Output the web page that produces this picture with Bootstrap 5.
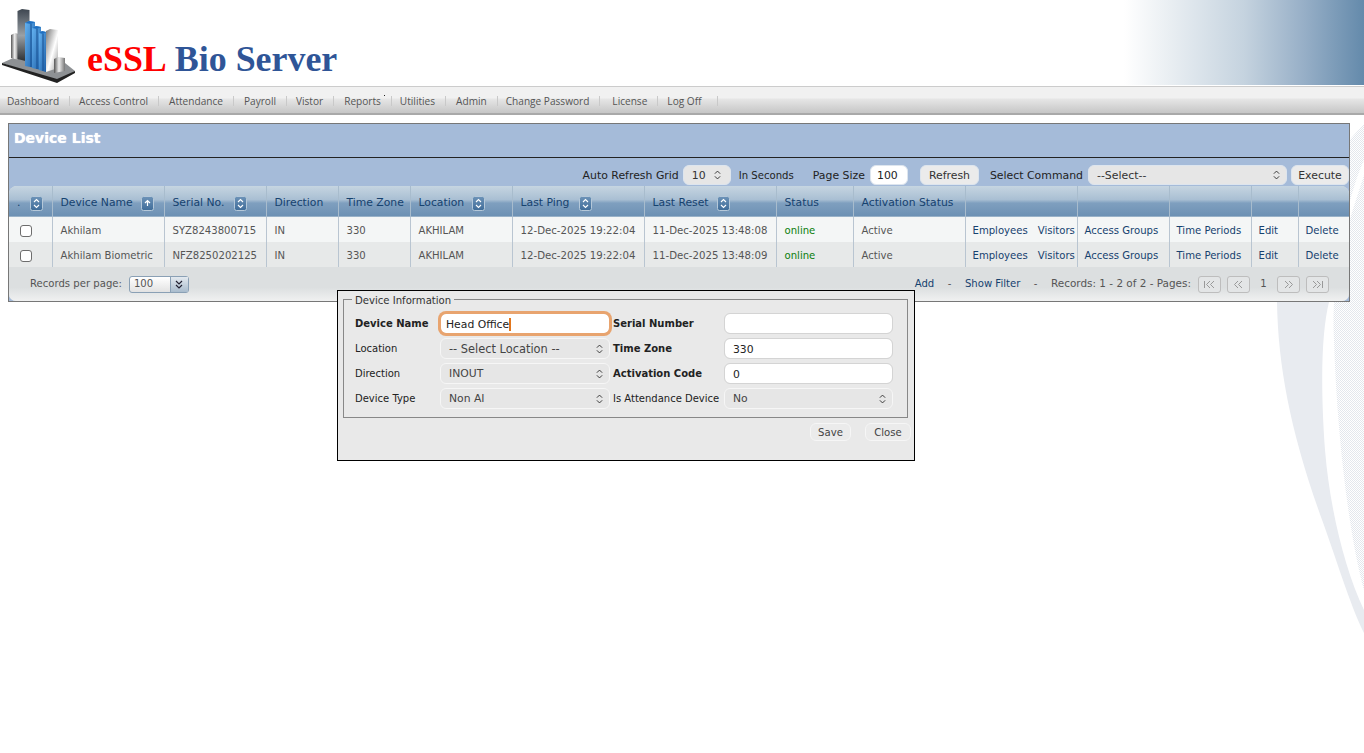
<!DOCTYPE html>
<html lang="en">
<head>
<meta charset="UTF-8">
<title>eSSL Bio Server</title>
<link href="https://cdn.jsdelivr.net/npm/bootstrap@5.3.0/dist/css/bootstrap.min.css" rel="stylesheet">
<style>
html, body { height: 100%; overflow: hidden; }
body { background: #fff; font-family: "DejaVu Sans", Verdana, sans-serif; font-size: 10px; color: #444; position: relative; }
.swoosh { position: absolute; right: 0; top: 0; z-index: -1; }

.top-head { height: 85px; }
.logo-box { width: 87px; height: 85px; }
.brand-name { font-family: "Liberation Serif", serif; font-weight: 700; font-size: 35.9px; color: #2f5597; line-height: 1; margin-top: 42px; white-space: nowrap; }
.brand-name b { color: #f00; margin-right: 8px; }
.head-fade { width: 240px; height: 85px; background: linear-gradient(90deg, #fff 0%, #eef2f5 15%, #c5d3df 50%, #97afc7 75%, #648aab 100%); }

.main-menu { height: 29px; margin-top: 1px; border-top: 1px solid #ccc; border-bottom: 2px solid #a9a9a9; background: linear-gradient(180deg, #f1f1f1 0, #f1f1f1 11px, #e6e6e6 12px, #c6c6c6 100%); font-family: "Open Sans", sans-serif; font-size: 10.1px; color: #555; padding: 2px 0 0 7px; }
.main-menu span { padding-right: 10px; margin-right: 10px; border-right: 1px solid #c9c9c9; line-height: 10px; white-space: nowrap; }
.main-menu .menu-tight { margin-right: 9px; }
.main-menu .menu-tighter { margin-right: 8px; }
.main-menu .menu-loose { margin-right: 12px; }
.main-menu .menu-last { padding-right: 16px; }
.menu-dot { position: relative; }
.menu-dot::after { content: ""; position: absolute; right: 6px; top: -1px; width: 1px; height: 1px; background: #222; }

.grid-panel { margin: 8px 14px 0 8px; border: 1px solid #777; background: #a5bbd9; }
.panel-title { height: 34px; padding: 0 0 5px 5px; border-bottom: 1px solid #222; color: #fff; font-weight: 700; font-size: 14px; text-shadow: 0 0 1px #fff; }
.tool-strip { height: 28px; font-size: 10.9px; color: #222; padding-top: 6px; white-space: nowrap; }
.tool-strip > span { padding-top: 2px; }
.strip-select, .strip-input, .strip-btn { height: 20px; border: 1px solid #dde5ee; border-radius: 6px; font-size: 10.9px; color: #333; padding: 1px 8px 0; line-height: 18px; flex: none; }
.strip-select { background-color: #e6e6e6; }
.strip-input { background: #fff; color: #222; width: 38px; padding: 1px 6px 0; margin-left: 5px; }
.strip-btn { background: #ebebeb; }
.form-select.refresh-pick { width: 48px; margin-left: 4px; padding: 1px 0 0 8px; }
.form-select.cmd-pick { width: 199px; margin-left: 5px; }
.strip-gap-s { margin-left: 8px; font-size: 10.1px; }
.strip-gap-m { margin-left: 19px; }
.strip-gap-l { margin-left: 12px; }
.strip-gap-x { margin-left: 11px; }
.strip-gap-t { margin-left: 4px; width: 58px; padding: 1px 0 0; }
.refresh-btn { width: 59px; padding: 1px 0 0; }

.form-select.strip-select, .form-select.info-select {
  background-image: url("data:image/svg+xml,%3Csvg xmlns='http://www.w3.org/2000/svg' viewBox='0 0 8 11'%3E%3Cpath d='M1 4l3-3 3 3M1 7l3 3 3-3' fill='none' stroke='%23333' stroke-width='1.1'/%3E%3C/svg%3E");
  background-position: right 6px center; background-size: 7px 10px; box-shadow: none;
}
.form-select.strip-select.refresh-pick { background-position: right 9px center; }

.grid-shell { border-radius: 8px 8px 7px 7px; overflow: hidden; background: #dcdfe0; }
.devgrid { table-layout: fixed; width: 1340px; margin: 0; --bs-table-bg: transparent; --bs-table-border-color: #b9c5d1; }
.devgrid.table > :not(caption) > * > * { padding: 3px 8px 0; border-bottom: 0; border-right: 1px solid #b9c5d1; vertical-align: middle; white-space: nowrap; color: #555; box-shadow: none; }
.devgrid.table > :not(caption) > * > *:last-child { border-right: 0; }
.devgrid thead tr { height: 31px; background: linear-gradient(180deg, #c6d5e1 0, #a9bfd3 44%, #7f9fbf 55%, #6d91b4 96%, #b6c8d6 100%); }
.devgrid.table > thead > tr > th { padding-top: 4px; font-weight: 400; font-size: 10.8px; color: #16426f; border-right-color: #a8bccd; }
.devgrid tbody tr { height: 25px; background: #f4f6f6; }
.devgrid tbody tr:nth-child(2) { background: #e7e9e9; }
.devgrid.table > tbody > tr > td { font-size: 10.1px; }
.devgrid.table > tbody > tr > td.date-cell { font-size: 10.2px; }
.devgrid.table > tbody > tr > td.link-cell { padding-left: 7px; }
.devgrid.table > tbody > tr > td a { color: #16426f; text-decoration: none; }
.devgrid.table > tbody > tr > td.is-online { color: #0b800b; }
.links-gap { margin-left: 10px; }
.head-cell { overflow: hidden; }
.head-wide { gap: 10px; }
.sort-ico { width: 13px; height: 15px; flex: none; display: block; }
.row-check { width: 12px; height: 12px; border: 1px solid #6d6d6d; border-radius: 3px; background: #fff; display: block; margin-left: 3px; }

.grid-foot { height: 34px; padding: 0 20px 0 21px; font-size: 10.1px; color: #555; background: linear-gradient(180deg, #dcdfe0 0, #dcdfe0 60%, #f0f1f1 100%); }
.grid-foot a { color: #16426f; text-decoration: none; }
.page-size { width: 60px; height: 17px; margin-left: 7px; border: 1px solid #8aa0b5; border-radius: 3px; background: linear-gradient(180deg, #fff, #e2e2e2); }
.page-size i { font-style: normal; padding-left: 4px; flex: 1; }
.page-size u { width: 18px; height: 100%; text-decoration: none; border-left: 1px solid #8aa0b5; background: linear-gradient(180deg, #e3e9ef, #a9bccd); }
.foot-dash { margin: 0 13.5px; }
.foot-count { font-size: 10.45px; }
.pager-btn { width: 23px; height: 17px; border: 1px solid #bdbdbd; border-radius: 3px; background: #e3e5e6; flex: none; }
.pager-first { margin-left: 7px; }
.pager-next { margin-left: 6px; }
.pager-num { width: 27px; text-align: center; }

.info-dialog { position: absolute; left: 337px; top: 290px; width: 578px; height: 171px; border: 1px solid #000; background: #e9e9e9; padding: 3px 5px; color: #222; font-size: 10px; }
.info-set { border: 1px solid #888; height: 119px; padding: 11px 0 0 11px; margin: 5px 1px 0 0; position: relative; }
.info-legend { position: absolute; left: 8px; top: -6px; background: #e9e9e9; padding: 0 3px; font-size: 10.1px; line-height: 13px; width: auto; float: none; margin: 0; color: #333; }
.info-row { height: 25px; }
.info-label { width: 85px; flex: none; white-space: nowrap; }
.info-label2 { width: 111px; flex: none; white-space: nowrap; }
.info-ctl { position: relative; flex: none; width: 170px; margin-right: 3px; }
.info-ctl2 { flex: none; width: 169px; }
.info-input, .info-select { height: 21px; min-height: 0; border: 1px solid #d4d4d4; border-radius: 6px; padding: 0 8px; font-size: 10.8px; line-height: 19px; color: #222; box-shadow: none; }
.form-control.info-input { padding-top: 1px; }
.info-select { border-color: #f6f6f6; background-color: #e6e6e6; color: #444; }
.form-select.loc-pick { font-size: 11.4px; padding-top: 1px; }
.form-control.info-focus { border: 1px solid #e8a46f; box-shadow: 0 0 0 2px #e8a46f; border-radius: 6px; padding-left: 5px; }
.fake-caret { position: absolute; left: 69px; top: 5px; width: 2px; height: 13px; background: #e2761d; }
.dlg-btn { height: 18px; border: 1px solid #f6f6f6; border-radius: 6px; background: #ebebeb; font-size: 10.1px; color: #444; padding: 0; line-height: 15px; }
.btn-save { width: 41px; }
.btn-close-dlg { width: 46px; }
.dlg-actions { margin-top: 5px; margin-right: -2px; gap: 14px; }
</style>
</head>
<body>
<svg class="swoosh" width="120" height="753" viewBox="1244 0 120 753">
  <defs>
    <pattern id="stipple" width="2" height="2" patternUnits="userSpaceOnUse"><rect width="1" height="1" fill="#e3e7ed"/><rect x="1" y="1" width="1" height="1" fill="#e3e7ed"/></pattern>
  </defs>
  <path d="M1277 302C1278 367 1291 433 1321 517C1335 555 1350 605 1364 633L1364 610C1345 570 1330 510 1325 450C1320 380 1322 330 1329 302Z" fill="#e8ebf0"/>
  <path d="M1364 124C1320 170 1276 240 1277 302L1329 302C1338 250 1350 190 1364 160Z" fill="url(#stipple)"/>
  <path d="M1364 175C1350 220 1330 270 1334 340C1337 440 1350 540 1364 590Z" fill="url(#stipple)"/>
</svg>
<svg width="0" height="0" class="position-absolute">
  <defs>
    <linearGradient id="sortFill" x1="0" y1="0" x2="0" y2="1"><stop offset="0" stop-color="#6d93b8"/><stop offset="1" stop-color="#3f6c99"/></linearGradient>
    <symbol id="sortBoth" viewBox="0 0 13 15"><rect x=".5" y=".5" width="12" height="14" rx="2" fill="url(#sortFill)" stroke="#b5c8d9"/><path d="M4 6l2.500-2.500L9 6M4 9l2.500 2.500L9 9" fill="none" stroke="#fff" stroke-width="1.100"/></symbol>
    <symbol id="sortUp" viewBox="0 0 13 15"><rect x=".5" y=".5" width="12" height="14" rx="2" fill="url(#sortFill)" stroke="#b5c8d9"/><path d="M4 7l2.500-2.500L9 7M6.500 5v5" fill="none" stroke="#fff" stroke-width="1.200"/></symbol>
  </defs>
</svg>

<div class="top-head d-flex">
  <div class="logo-box">
    <svg width="87" height="85" viewBox="0 0 87 85">
      <defs>
        <linearGradient id="chrome" x1="0" y1="0" x2="1" y2="0"><stop offset="0" stop-color="#555"/><stop offset=".45" stop-color="#eee"/><stop offset="1" stop-color="#777"/></linearGradient>
        <linearGradient id="chromeWhite" x1="0" y1="0" x2="1" y2="1"><stop offset="0" stop-color="#777"/><stop offset=".55" stop-color="#fff"/><stop offset="1" stop-color="#999"/></linearGradient>
        <linearGradient id="darkBar" x1="0" y1="0" x2="0" y2="1"><stop offset="0" stop-color="#3d4650"/><stop offset=".5" stop-color="#9aa0a5"/><stop offset="1" stop-color="#2a2d30"/></linearGradient>
        <linearGradient id="blueBar" x1="0" y1="0" x2="1" y2="1"><stop offset="0" stop-color="#66b4f2"/><stop offset="1" stop-color="#1d5fa8"/></linearGradient>
      </defs>
      <path d="M2 63L20 55L65 63L75 71L57 82Z" fill="#8e9194"/>
      <path d="M2 63L57 79L75 71L75 73L57 83L2 65Z" fill="#222"/>
      <path d="M11 35L15 33L19 34L19 60L11 58Z" fill="url(#chrome)"/>
      <path d="M17.500 11L22 9L29.500 10L29.500 62L17.500 59Z" fill="url(#darkBar)"/>
      <path d="M25 23L29 21L35 22L35 68L25 66Z" fill="url(#blueBar)"/>
      <path d="M32 28L36 26L41 27L41 70L32 68Z" fill="url(#blueBar)"/>
      <path d="M39 33L42 31L46 32L46 72L39 70Z" fill="url(#blueBar)"/>
      <path d="M25 23L29 21L35 22L31 24Z M32 28L36 26L41 27L37 29Z M39 33L42 31L46 32L43 34Z" fill="#1f6fc0"/>
      <path d="M31 24V67 M37 29V69 M43 34V71" stroke="#174f90" fill="none"/>
      <path d="M46 31L50 29L58 30L58 68L46 72Z" fill="url(#chromeWhite)"/>
      <path d="M54 59L58 57L65 58L65 71L54 73Z" fill="url(#chrome)"/>
    </svg>
  </div>
  <div class="brand-name"><b>eSSL</b>Bio Server</div>
  <div class="head-fade ms-auto"></div>
</div>

<div class="main-menu d-flex align-items-center">
  <span class="menu-tight">Dashboard</span><span>Access Control</span><span>Attendance</span><span class="menu-tight">Payroll</span><span>Vistor</span><span class="menu-dot menu-tighter">Reports</span><span>Utilities</span><span class="menu-tighter">Admin</span><span class="menu-loose">Change Password</span><span class="menu-tight">License</span><span class="menu-last">Log Off</span>
</div>

<div class="grid-panel">
  <div class="panel-title d-flex align-items-center">Device List</div>
  <div class="tool-strip d-flex align-items-center justify-content-end">
    <span>Auto Refresh Grid</span>
    <select class="form-select strip-select refresh-pick" aria-label="Auto refresh"><option>10</option></select>
    <span class="strip-gap-s">In Seconds</span>
    <span class="strip-gap-m">Page Size</span>
    <input class="strip-input" value="100" aria-label="Page size">
    <button type="button" class="strip-btn refresh-btn strip-gap-l">Refresh</button>
    <span class="strip-gap-x">Select Command</span>
    <select class="form-select strip-select cmd-pick" aria-label="Select command"><option>--Select--</option></select>
    <button type="button" class="strip-btn strip-gap-t">Execute</button>
  </div>
  <div class="grid-shell">
    <table class="table devgrid">
      <colgroup><col width="43"><col width="112"><col width="102"><col width="72"><col width="72"><col width="102"><col width="132"><col width="132"><col width="77"><col width="112"><col width="112"><col width="92"><col width="82"><col width="47"><col width="51"></colgroup>
      <thead>
        <tr>
          <th><div class="d-flex align-items-center head-wide">.<svg class="sort-ico"><use href="#sortBoth"/></svg></div></th>
          <th><div class="d-flex align-items-center gap-2">Device Name<svg class="sort-ico"><use href="#sortUp"/></svg></div></th>
          <th><div class="d-flex align-items-center head-wide">Serial No.<svg class="sort-ico"><use href="#sortBoth"/></svg></div></th>
          <th><div class="d-flex align-items-center gap-2 head-cell">Direction<svg class="sort-ico"><use href="#sortBoth"/></svg></div></th>
          <th>Time Zone</th>
          <th><div class="d-flex align-items-center gap-2">Location<svg class="sort-ico"><use href="#sortBoth"/></svg></div></th>
          <th><div class="d-flex align-items-center head-wide">Last Ping<svg class="sort-ico"><use href="#sortBoth"/></svg></div></th>
          <th><div class="d-flex align-items-center gap-2">Last Reset<svg class="sort-ico"><use href="#sortBoth"/></svg></div></th>
          <th>Status</th>
          <th>Activation Status</th>
          <th></th><th></th><th></th><th></th><th></th>
        </tr>
      </thead>
      <tbody>
        <tr>
          <td><span class="row-check"></span></td><td>Akhilam</td><td>SYZ8243800715</td><td>IN</td><td>330</td><td>AKHILAM</td><td class="date-cell">12-Dec-2025 19:22:04</td><td class="date-cell">11-Dec-2025 13:48:08</td><td class="is-online">online</td><td>Active</td>
          <td class="link-cell"><a href="#">Employees</a><a href="#" class="links-gap">Visitors</a></td><td class="link-cell"><a href="#">Access Groups</a></td><td class="link-cell"><a href="#">Time Periods</a></td><td class="link-cell"><a href="#">Edit</a></td><td class="link-cell"><a href="#">Delete</a></td>
        </tr>
        <tr>
          <td><span class="row-check"></span></td><td>Akhilam Biometric</td><td>NFZ8250202125</td><td>IN</td><td>330</td><td>AKHILAM</td><td class="date-cell">12-Dec-2025 19:22:04</td><td class="date-cell">11-Dec-2025 13:48:09</td><td class="is-online">online</td><td>Active</td>
          <td class="link-cell"><a href="#">Employees</a><a href="#" class="links-gap">Visitors</a></td><td class="link-cell"><a href="#">Access Groups</a></td><td class="link-cell"><a href="#">Time Periods</a></td><td class="link-cell"><a href="#">Edit</a></td><td class="link-cell"><a href="#">Delete</a></td>
        </tr>
      </tbody>
    </table>
    <div class="grid-foot d-flex align-items-center">
      <span>Records per page:</span>
      <div class="page-size d-flex align-items-center"><i>100</i><u class="d-flex align-items-center justify-content-center"><svg width="10" height="9" viewBox="0 0 10 9"><path d="M2 1l3 3 3-3M2 5l3 3 3-3" fill="none" stroke="#223" stroke-width="1.200"/></svg></u></div>
      <div class="ms-auto d-flex align-items-center">
        <a href="#">Add</a><span class="foot-dash">-</span><a href="#">Show Filter</a><span class="foot-dash">-</span><span class="foot-count">Records: 1 - 2 of 2 - Pages:</span>
        <span class="pager-btn pager-first d-flex align-items-center justify-content-center"><svg width="13" height="9" viewBox="0 0 13 9"><path d="M1.500 1v7M7 1L3.500 4.500 7 8M11 1L7.500 4.500 11 8" fill="none" stroke="#999"/></svg></span>
        <span class="pager-btn pager-next d-flex align-items-center justify-content-center"><svg width="11" height="9" viewBox="0 0 11 9"><path d="M5 1L1.500 4.500 5 8M9 1L5.500 4.500 9 8" fill="none" stroke="#999"/></svg></span>
        <span class="pager-num">1</span>
        <span class="pager-btn d-flex align-items-center justify-content-center"><svg width="11" height="9" viewBox="0 0 11 9"><path d="M2 1l3.500 3.500L2 8M6 1l3.500 3.500L6 8" fill="none" stroke="#999"/></svg></span>
        <span class="pager-btn pager-next d-flex align-items-center justify-content-center"><svg width="13" height="9" viewBox="0 0 13 9"><path d="M2 1l3.500 3.500L2 8M6 1l3.500 3.500L6 8M11.500 1v7" fill="none" stroke="#999"/></svg></span>
      </div>
    </div>
  </div>
</div>

<div class="info-dialog">
  <div class="info-set">
    <div class="info-legend">Device Information</div>
    <div class="info-row d-flex align-items-center">
      <div class="info-label fw-bold">Device Name</div>
      <div class="info-ctl"><input class="form-control info-input info-focus" value="Head Office" aria-label="Device name"><span class="fake-caret"></span></div>
      <div class="info-label2 fw-bold">Serial Number</div>
      <div class="info-ctl2"><input class="form-control info-input" aria-label="Serial number"></div>
    </div>
    <div class="info-row d-flex align-items-center">
      <div class="info-label">Location</div>
      <div class="info-ctl"><select class="form-select info-select loc-pick" aria-label="Location"><option>-- Select Location --</option></select></div>
      <div class="info-label2 fw-bold">Time Zone</div>
      <div class="info-ctl2"><input class="form-control info-input" value="330" aria-label="Time zone"></div>
    </div>
    <div class="info-row d-flex align-items-center">
      <div class="info-label">Direction</div>
      <div class="info-ctl"><select class="form-select info-select" aria-label="Direction"><option>INOUT</option></select></div>
      <div class="info-label2 fw-bold">Activation Code</div>
      <div class="info-ctl2"><input class="form-control info-input" value="0" aria-label="Activation code"></div>
    </div>
    <div class="info-row d-flex align-items-center">
      <div class="info-label">Device Type</div>
      <div class="info-ctl"><select class="form-select info-select" aria-label="Device type"><option>Non AI</option></select></div>
      <div class="info-label2">Is Attendance Device</div>
      <div class="info-ctl2"><select class="form-select info-select" aria-label="Is attendance device"><option>No</option></select></div>
    </div>
  </div>
  <div class="d-flex justify-content-end dlg-actions">
    <button type="button" class="dlg-btn btn-save">Save</button>
    <button type="button" class="dlg-btn btn-close-dlg">Close</button>
  </div>
</div>

<script src="https://cdn.jsdelivr.net/npm/bootstrap@5.3.0/dist/js/bootstrap.bundle.min.js"></script>
</body>
</html>
